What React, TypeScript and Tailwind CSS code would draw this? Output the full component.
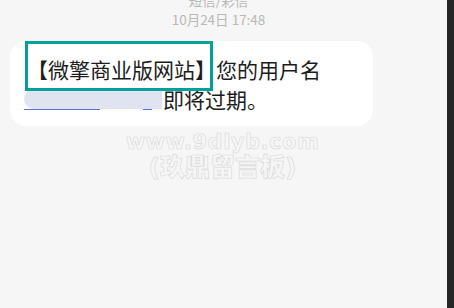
import React from 'react';

const cjk = { fontFamily: '"Noto Sans CJK SC", "Noto Sans", sans-serif' };

export default function App() {
  return (
    <div className="flex w-[454px] h-[308px] overflow-hidden bg-[#f6f6f6]" style={cjk}>
      <div className="relative flex flex-1 flex-col">
        {/* header */}
        <div className="mt-[-9px] flex flex-col items-center pr-[10px] text-[13.5px] leading-[19px] text-[#b8b8b8]">
          <span>短信/彩信</span>
          <span>10月24日 17:48</span>
        </div>

        {/* message bubble */}
        <div className="relative ml-[10px] mt-[12px] h-[85px] w-[363px] rounded-[16px] bg-white pl-[17px] pt-[13px] text-[21px] leading-[30px] text-[#1c1c1c]">
          <div>【微擎商业版网站】您的用户名</div>
          <div className="flex items-center">
            <span className="relative ml-[-3px] mr-[1px] inline-block h-[20px] w-[138px] rounded-l-full rounded-r-[6px] bg-[#e0e4f1]">
              <span className="absolute bottom-[-1px] left-0 h-[1px] w-[76px] bg-[#5b6fe0]" />
              <span className="absolute bottom-[-1px] left-[119px] h-[1px] w-[9px] bg-[#5b6fe0]" />
            </span>
            <span>即将过期。</span>
          </div>

          {/* highlight box */}
          <div className="absolute left-[15px] top-0 h-[50px] w-[188px] border-[3px] border-[#00a19a]" />
        </div>

        {/* watermark */}
        <div
          className="mt-[5px] flex flex-col items-center pr-[2px] font-black text-[#f6f6f6] [-webkit-text-stroke:0.6px_#d6d6d6]"
          style={{ fontFamily: '"DejaVu Sans", "Noto Sans CJK SC", sans-serif' }}
        >
          <span className="text-[21px] leading-[22px] tracking-[0.5px]">www.9dlyb.com</span>
          <span className="text-[25px] leading-[30px]">(玖鼎留言板)</span>
        </div>
      </div>
      <div className="w-[7px] bg-[#262626]" />
    </div>
  );
}
